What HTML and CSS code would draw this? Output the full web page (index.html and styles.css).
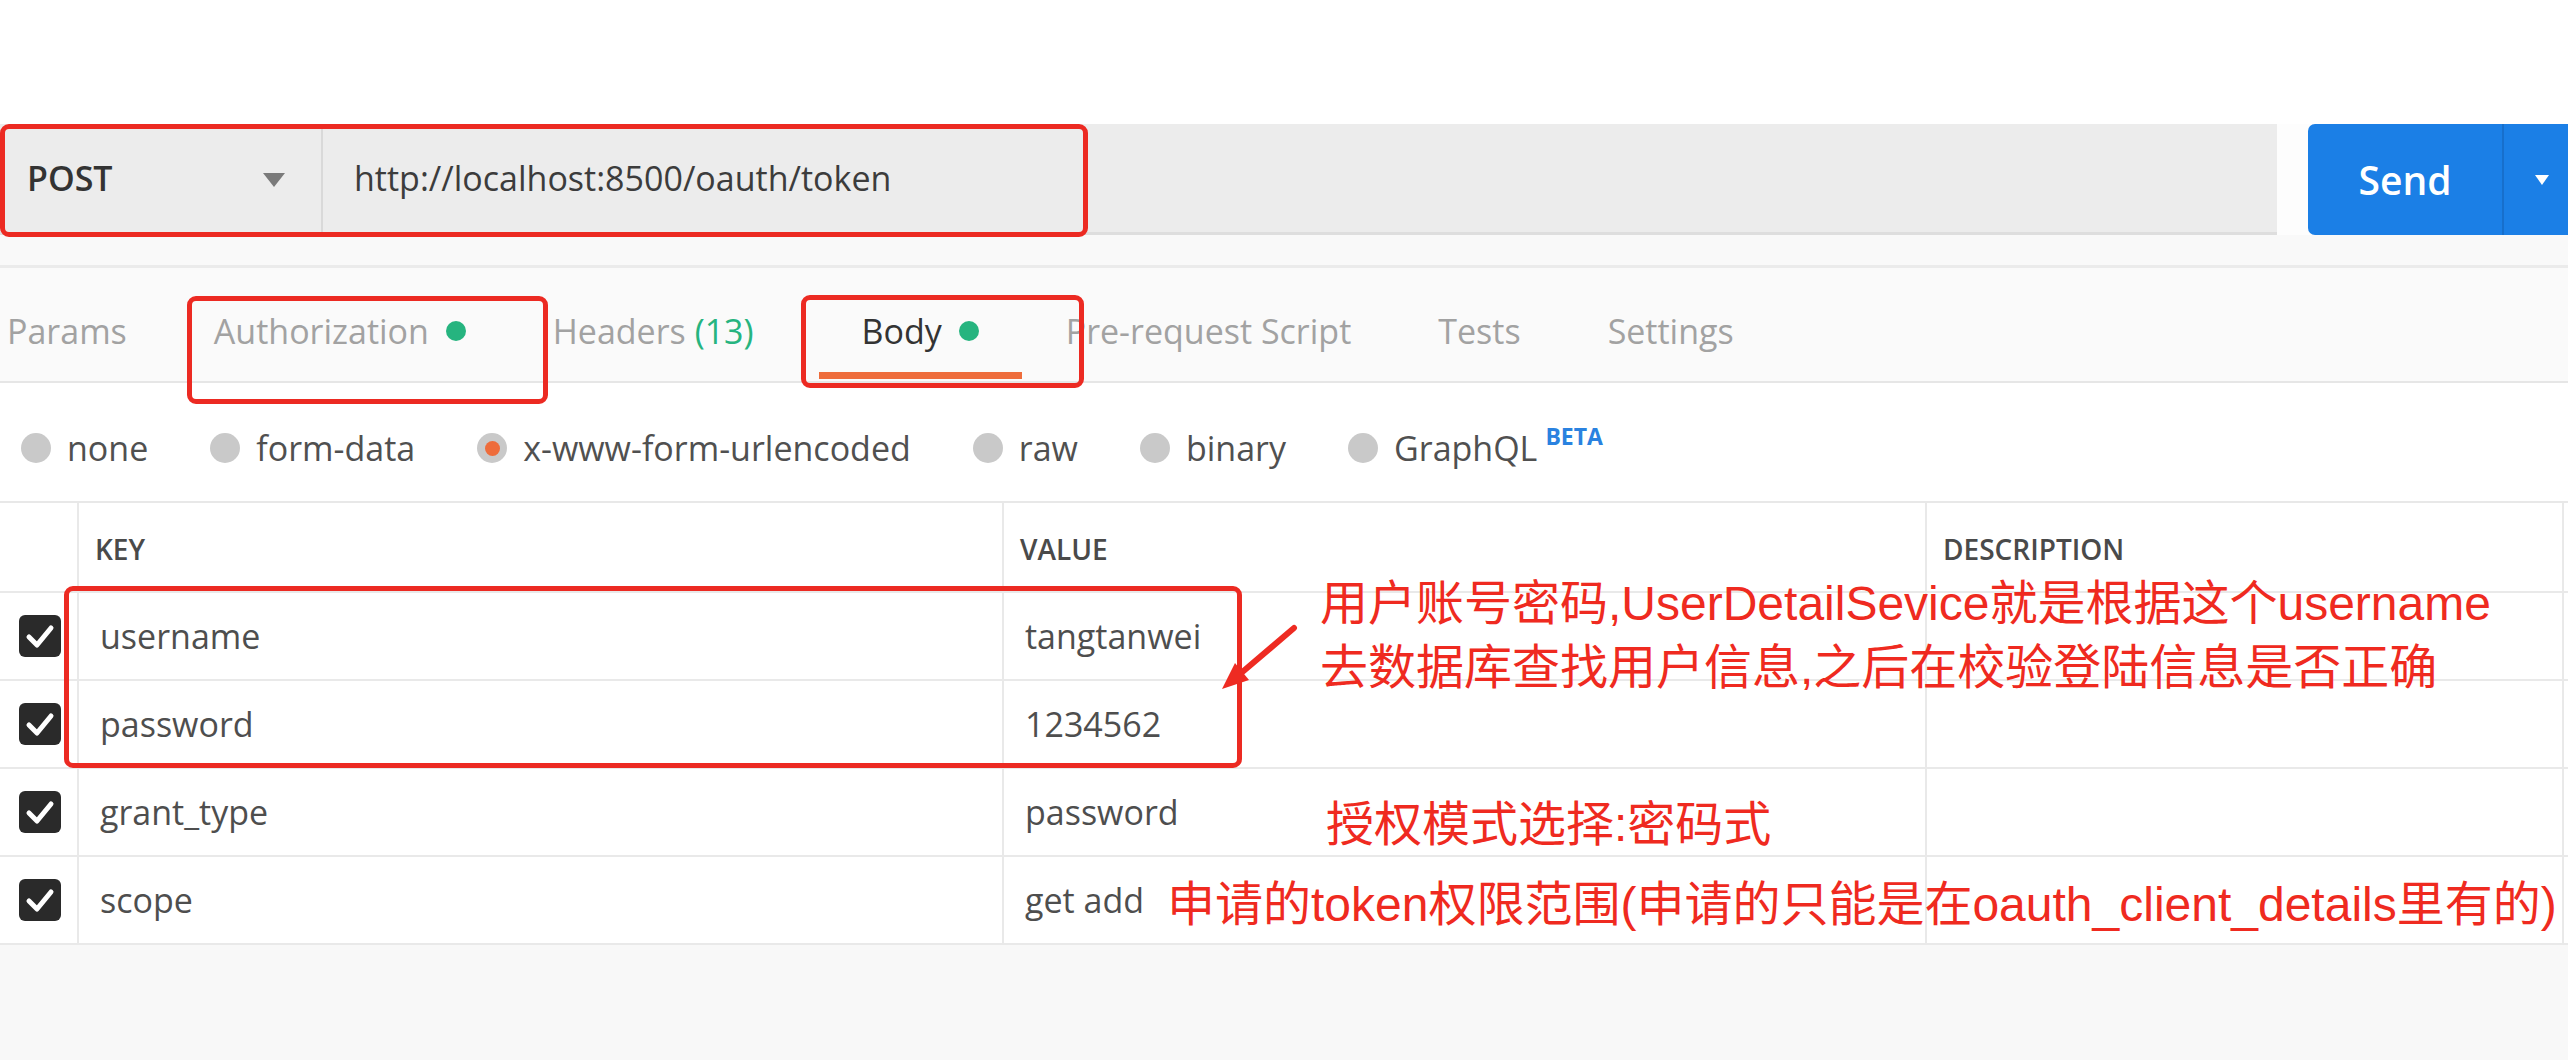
FILE: index.html
```html
<!DOCTYPE html>
<html lang="zh-CN">
<head>
<meta charset="utf-8">
<title>POST oauth/token</title>
<link rel="stylesheet" href="styles.css">
</head>
<body>
<div class="page">
  <div class="topgap"></div>

  <div class="request">
    <div class="urlbar">
      <div class="method"><span>POST</span><span class="caret"></span></div>
      <div class="url">http://localhost:8500/oauth/token</div>
    </div>
    <div class="send">
      <span class="send-label">Send</span>
      <span class="send-more"><span class="caret caret-white"></span></span>
    </div>
  </div>

  <div class="subgap"></div>

  <nav class="tabs">
    <span class="tab">Params</span>
    <span class="tab">Authorization <i class="dot"></i></span>
    <span class="tab">Headers <em class="count">(13)</em></span>
    <span class="tab active">Body <i class="dot"></i></span>
    <span class="tab">Pre-request Script</span>
    <span class="tab">Tests</span>
    <span class="tab">Settings</span>
  </nav>

  <div class="bodytypes">
    <label class="radio"><span class="knob"></span>none</label>
    <label class="radio"><span class="knob"></span>form-data</label>
    <label class="radio"><span class="knob on"></span>x-www-form-urlencoded</label>
    <label class="radio"><span class="knob"></span>raw</label>
    <label class="radio"><span class="knob"></span>binary</label>
    <label class="radio"><span class="knob"></span>GraphQL<sup class="beta">BETA</sup></label>
  </div>

  <div class="kv">
    <div class="kv-row kv-head">
      <div class="cell"></div>
      <div class="cell">KEY</div>
      <div class="cell">VALUE</div>
      <div class="cell">DESCRIPTION</div>
      <div class="cell"></div>
    </div>
    <div class="kv-row">
      <div class="cell chk"><span class="box"><svg viewBox="0 0 42 42" width="42" height="42"><path d="M10 22 L18 30 L32 13" fill="none" stroke="#fff" stroke-width="5" stroke-linecap="round" stroke-linejoin="round"/></svg></span></div>
      <div class="cell">username</div>
      <div class="cell">tangtanwei</div>
      <div class="cell"></div>
      <div class="cell"></div>
    </div>
    <div class="kv-row">
      <div class="cell chk"><span class="box"><svg viewBox="0 0 42 42" width="42" height="42"><path d="M10 22 L18 30 L32 13" fill="none" stroke="#fff" stroke-width="5" stroke-linecap="round" stroke-linejoin="round"/></svg></span></div>
      <div class="cell">password</div>
      <div class="cell">1234562</div>
      <div class="cell"></div>
      <div class="cell"></div>
    </div>
    <div class="kv-row">
      <div class="cell chk"><span class="box"><svg viewBox="0 0 42 42" width="42" height="42"><path d="M10 22 L18 30 L32 13" fill="none" stroke="#fff" stroke-width="5" stroke-linecap="round" stroke-linejoin="round"/></svg></span></div>
      <div class="cell">grant_type</div>
      <div class="cell">password</div>
      <div class="cell"></div>
      <div class="cell"></div>
    </div>
    <div class="kv-row">
      <div class="cell chk"><span class="box"><svg viewBox="0 0 42 42" width="42" height="42"><path d="M10 22 L18 30 L32 13" fill="none" stroke="#fff" stroke-width="5" stroke-linecap="round" stroke-linejoin="round"/></svg></span></div>
      <div class="cell">scope</div>
      <div class="cell">get add</div>
      <div class="cell"></div>
      <div class="cell"></div>
    </div>
  </div>

  <div class="rest"></div>

  <!-- annotation overlays -->
  <div class="mark mark-url"></div>
  <div class="mark mark-auth"></div>
  <div class="mark mark-body"></div>
  <div class="mark mark-rows"></div>

  <svg class="arrow" viewBox="0 0 110 100" width="110" height="100">
    <path d="M94 26 L40 72" stroke="#ee2b22" stroke-width="6" stroke-linecap="round"/>
    <path d="M22 87 L49 78 L35 61 Z" fill="#ee2b22"/>
  </svg>

  <div class="note note-user">
    <div>用户账号密码,UserDetailSevice就是根据这个username</div>
    <div>去数据库查找用户信息,之后在校验登陆信息是否正确</div>
  </div>
  <div class="note note-grant">授权模式选择:密码式</div>
  <div class="note note-scope">申请的token权限范围(申请的只能是在oauth_client_details里有的)</div>
</div>
</body>
</html>
```

FILE: styles.css
```css
* { box-sizing: border-box; }

html, body {
  margin: 0;
  padding: 0;
}

body {
  width: 2568px;
  height: 1060px;
  overflow: hidden;
  background: #f7f7f7;
  font-family: "Open Sans", "Noto Sans", "Liberation Sans", sans-serif;
  color: #505050;
}

.page {
  position: relative;
  width: 2568px;
  height: 1060px;
  display: flex;
  flex-direction: column;
}

.topgap {
  height: 124px;
  background: #ffffff;
  flex: none;
}

/* ---------- request bar ---------- */
.request {
  height: 111px;
  flex: none;
  display: flex;
  gap: 31px;
  background: #fdfdfd;
}

.urlbar {
  flex: 0 0 2277px;
  display: flex;
  background: #ececec;
  border-bottom: 3px solid #dedede;
}

.method {
  flex: 0 0 323px;
  display: flex;
  align-items: center;
  justify-content: space-between;
  padding: 0 36px 0 27px;
  border-right: 2px solid #d9d9d9;
  font-size: 34px;
  font-weight: 600;
  color: #333;
}

.caret {
  width: 0;
  height: 0;
  border-left: 11px solid transparent;
  border-right: 11px solid transparent;
  border-top: 14px solid #7a7a7a;
  margin-top: 4px;
}

.caret-white {
  border-left-width: 7px;
  border-right-width: 7px;
  border-top: 10px solid #ffffff;
  margin-top: 0;
}

.url {
  display: flex;
  align-items: center;
  padding-left: 31px;
  font-size: 34px;
  color: #3c3c3c;
}

.send {
  flex: 1;
  display: flex;
  background: #1b7fe6;
  border-radius: 7px 0 0 7px;
  color: #fff;
}

.send-label {
  flex: 0 0 196px;
  display: flex;
  align-items: center;
  justify-content: center;
  font-size: 39px;
  font-weight: 600;
  border-right: 2px solid #176fcc;
}

.send-more {
  flex: 1;
  display: flex;
  align-items: center;
  justify-content: center;
  padding-left: 12px;
}

/* ---------- tabs ---------- */
.subgap {
  height: 33px;
  flex: none;
  background: #f9f9f9;
  border-bottom: 3px solid #ebebeb;
}

.tabs {
  height: 115px;
  flex: none;
  display: flex;
  align-items: flex-start;
  gap: 87px;
  padding: 40px 0 0 7px;
  background: #fafafa;
  border-bottom: 2px solid #e6e6e6;
  font-size: 34px;
  line-height: 46px;
  color: #a2a2a2;
}

.tab {
  position: relative;
  display: flex;
  align-items: center;
  white-space: pre;
}

.tab.active {
  color: #333;
  margin-left: 21px;
}

.tab.active::after {
  content: "";
  position: absolute;
  left: -43px;
  right: -43px;
  top: 64px;
  height: 7px;
  background: #ee6c3b;
}

.dot {
  display: inline-block;
  width: 20px;
  height: 20px;
  border-radius: 50%;
  background: #26b47f;
  margin-left: 8px;
}

.count {
  font-style: normal;
  color: #26b47f;
}

/* ---------- body types ---------- */
.bodytypes {
  height: 118px;
  flex: none;
  display: flex;
  align-items: center;
  gap: 62px;
  padding: 12px 0 0 21px;
  background: #fff;
  font-size: 34px;
}

.radio {
  display: flex;
  align-items: center;
  gap: 16px;
  position: relative;
}

.knob {
  width: 30px;
  height: 30px;
  border-radius: 50%;
  background: #c9c9c9;
  display: flex;
  align-items: center;
  justify-content: center;
}

.knob.on::after {
  content: "";
  width: 15px;
  height: 15px;
  border-radius: 50%;
  background: #ee6c3b;
}

.beta {
  position: relative;
  top: -12px;
  margin-left: -8px;
  font-size: 23px;
  font-weight: 700;
  color: #2a82e0;
  line-height: 1;
}

/* ---------- key/value table ---------- */
.kv {
  flex: none;
  background: #fff;
  border-top: 2px solid #e8e8e8;
}

.kv-row {
  display: grid;
  grid-template-columns: 77px 925px 923px 637px 1fr;
  height: 88px;
  border-bottom: 2px solid #e9e9e9;
  font-size: 34px;
  color: #4e4e4e;
}

.kv-row .cell {
  display: flex;
  align-items: center;
  padding-left: 21px;
  border-left: 2px solid #e9e9e9;
  white-space: nowrap;
}

.kv-row .cell:first-child {
  border-left: none;
  padding-left: 19px;
}

.kv-head {
  height: 90px;
  font-size: 28px;
  font-weight: 600;
  color: #4a4a4a;
}

.kv-head .cell {
  padding-left: 16px;
  padding-top: 4px;
}

.box {
  width: 42px;
  height: 42px;
  border-radius: 6px;
  background: #2a2a2a;
  display: block;
}

.box svg {
  display: block;
}

.rest {
  flex: 1;
  background: #f8f8f8;
}

/* ---------- annotation overlays ---------- */
.mark {
  position: absolute;
  border: 5px solid #ec2a22;
  border-radius: 9px;
}

.mark-url  { left: 0;    top: 124px; width: 1088px; height: 113px; }
.mark-auth { left: 187px; top: 296px; width: 361px; height: 108px; }
.mark-body { left: 801px; top: 295px; width: 283px; height: 93px; }
.mark-rows { left: 64px;  top: 586px; width: 1178px; height: 182px; }

.arrow {
  position: absolute;
  left: 1200px;
  top: 602px;
}

.note {
  position: absolute;
  font-family: "Liberation Sans", "Noto Sans CJK SC", sans-serif;
  font-size: 48px;
  line-height: 64px;
  color: #ef2a20;
  white-space: nowrap;
}

.note-user  { left: 1320px; top: 572px; }
.note-grant { left: 1326px; top: 793px; }
.note-scope { left: 1167px; top: 873px; }
```
